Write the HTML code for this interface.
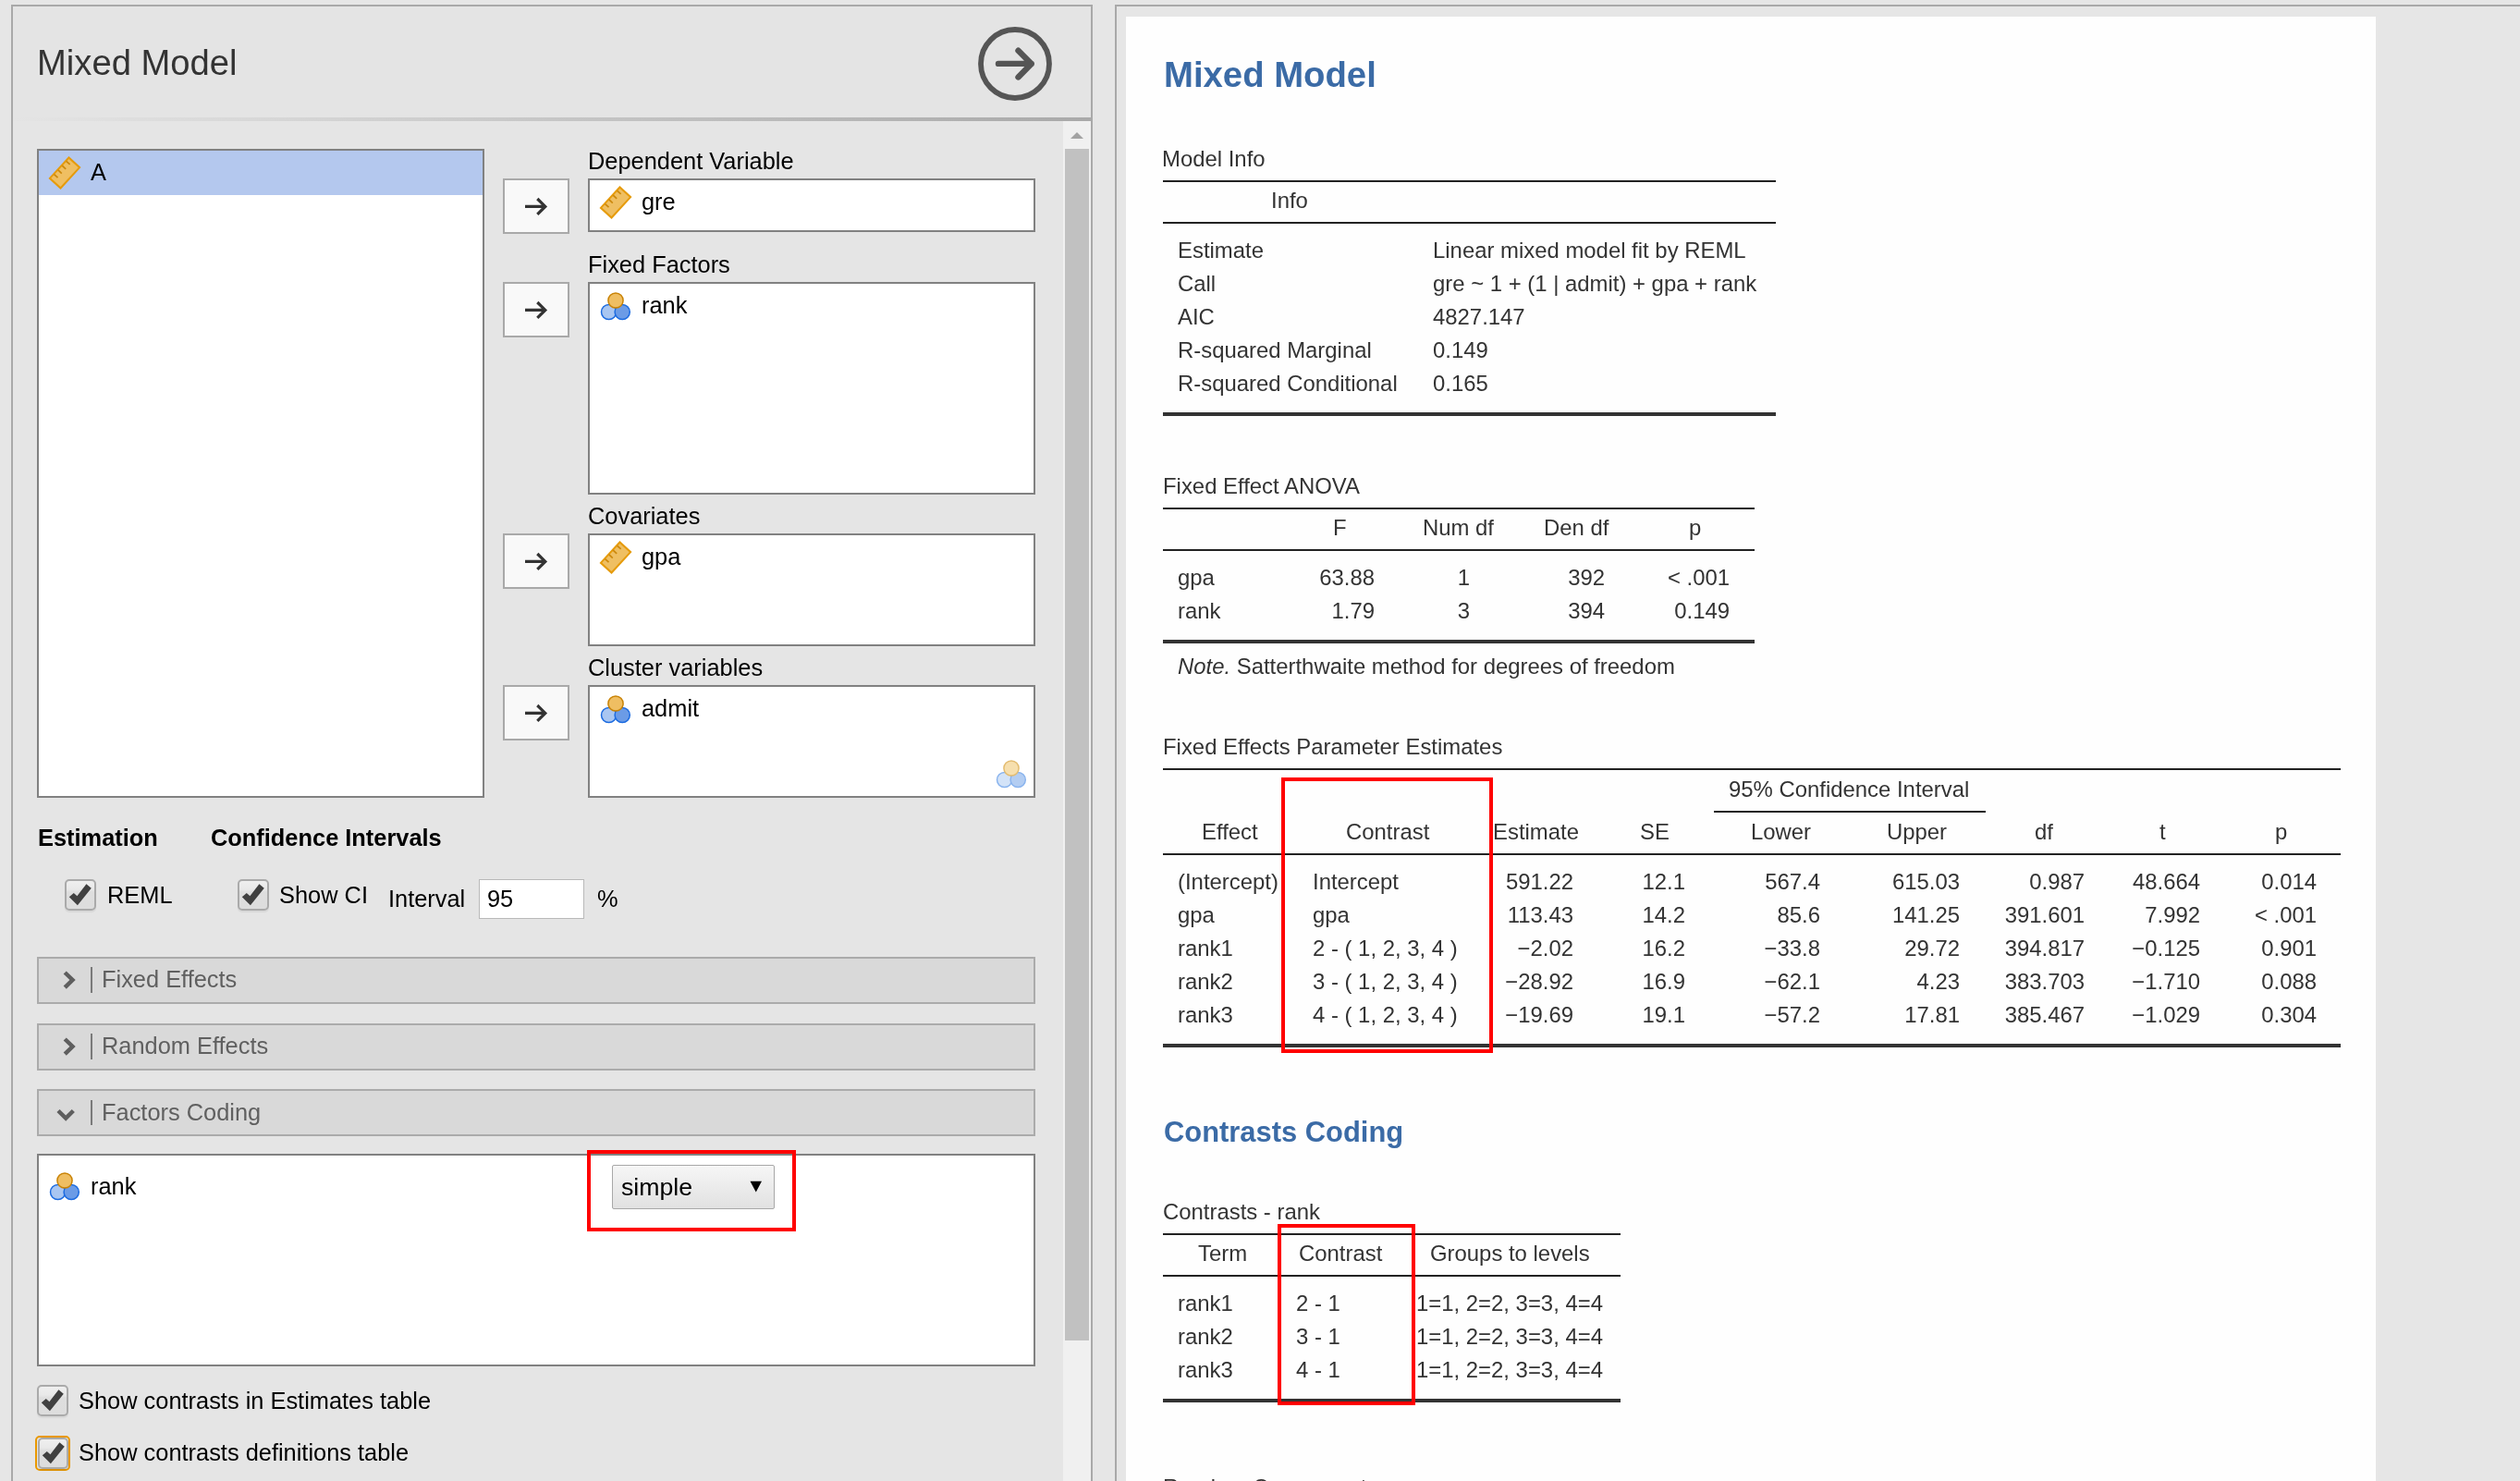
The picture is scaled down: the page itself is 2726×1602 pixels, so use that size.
<!DOCTYPE html>
<html><head><meta charset="utf-8"><title>Mixed Model</title>
<style>
html,body{margin:0;padding:0;}
body{width:2726px;height:1602px;overflow:hidden;position:relative;background:#e6e6e6;font-family:"Liberation Sans",sans-serif;}
.t{position:absolute;line-height:1;white-space:nowrap;will-change:transform;}
.r{position:absolute;}
svg.r{overflow:visible;}
</style></head><body>
<div class="r" style="left:12px;top:5px;width:1170px;height:1597px;background:#e5e5e5;border:2px solid #a9a9a9;border-bottom:none;box-sizing:border-box;"></div>
<div class="r" style="left:14px;top:7px;width:1166px;height:120px;background:#e4e4e4;"></div>
<div class="r" style="left:14px;top:127px;width:1166px;height:4px;background:linear-gradient(to right,#e4e4e4 0%,#d6d6d6 25%,#c6c6c6 50%,#b8b8b8 75%,#a9a9a9 100%);"></div>
<div class="t" style="top:48.76px;font-size:38.2px;color:#333;left:40.10px;">Mixed Model</div>
<svg class="r" style="left:1054px;top:25px" width="88" height="88" viewBox="0 0 88 88"><circle cx="44" cy="44" r="37" fill="none" stroke="#555" stroke-width="5.8"/><path d="M26 43.9 H61.7 M47.5 29.7 L61.7 43.9 L47.5 58.4" fill="none" stroke="#555" stroke-width="6.4" stroke-linecap="round" stroke-linejoin="round"/></svg>
<div class="r" style="left:1150px;top:131px;width:30px;height:1471px;background:#f0f0f0;"></div>
<svg class="r" style="left:1150px;top:131px" width="30" height="30" viewBox="0 0 30 30"><polygon points="8,19 15,12 22,19" fill="#a3a3a3"/></svg>
<div class="r" style="left:1152px;top:161px;width:26px;height:1289px;background:#c1c1c1;"></div>
<div class="r" style="left:40px;top:161px;width:484px;height:702px;background:#fff;border:2px solid #818181;box-sizing:border-box;"></div>
<div class="r" style="left:42px;top:163px;width:480px;height:48px;background:#b4c8ee;"></div>
<svg class="r" style="left:49.95px;top:167.24px" width="40" height="40" viewBox="-20 -20 40 40"><g transform="rotate(-47.4)"><rect x="-15.2" y="-7.9" width="30.4" height="15.8" fill="#efbf62" stroke="#e69b0b" stroke-width="2"/><g stroke="#cc880c" stroke-width="1.7"><line x1="-8.9" y1="-7.4" x2="-8.9" y2="-2.0"/><line x1="-2.6" y1="-7.4" x2="-2.6" y2="-2.0"/><line x1="3.9" y1="-7.4" x2="3.9" y2="-2.0"/><line x1="10.5" y1="-7.4" x2="10.5" y2="-2.0"/></g></g></svg>
<div class="t" style="top:173.50px;font-size:25.4px;color:#000;left:98.00px;">A</div>
<div class="r" style="left:544px;top:193px;width:72px;height:60px;border:2px solid #a9a9a9;background:#f9f9f9;box-sizing:border-box;"></div>
<svg class="r" style="left:544px;top:193px" width="72" height="60" viewBox="0 0 72 60"><path d="M24 30.4 H45.5 M37.3 22 L45.8 30.4 L37.3 38.8" fill="none" stroke="#333" stroke-width="3.2" stroke-linecap="butt" stroke-linejoin="miter"/></svg>
<div class="r" style="left:544px;top:305px;width:72px;height:60px;border:2px solid #a9a9a9;background:#f9f9f9;box-sizing:border-box;"></div>
<svg class="r" style="left:544px;top:305px" width="72" height="60" viewBox="0 0 72 60"><path d="M24 30.4 H45.5 M37.3 22 L45.8 30.4 L37.3 38.8" fill="none" stroke="#333" stroke-width="3.2" stroke-linecap="butt" stroke-linejoin="miter"/></svg>
<div class="r" style="left:544px;top:577px;width:72px;height:60px;border:2px solid #a9a9a9;background:#f9f9f9;box-sizing:border-box;"></div>
<svg class="r" style="left:544px;top:577px" width="72" height="60" viewBox="0 0 72 60"><path d="M24 30.4 H45.5 M37.3 22 L45.8 30.4 L37.3 38.8" fill="none" stroke="#333" stroke-width="3.2" stroke-linecap="butt" stroke-linejoin="miter"/></svg>
<div class="r" style="left:544px;top:741px;width:72px;height:60px;border:2px solid #a9a9a9;background:#f9f9f9;box-sizing:border-box;"></div>
<svg class="r" style="left:544px;top:741px" width="72" height="60" viewBox="0 0 72 60"><path d="M24 30.4 H45.5 M37.3 22 L45.8 30.4 L37.3 38.8" fill="none" stroke="#333" stroke-width="3.2" stroke-linecap="butt" stroke-linejoin="miter"/></svg>
<div class="t" style="top:161.50px;font-size:25.4px;color:#000;left:635.70px;">Dependent Variable</div>
<div class="r" style="left:636px;top:193px;width:484px;height:58px;background:#fff;border:2px solid #818181;box-sizing:border-box;"></div>
<svg class="r" style="left:646.05px;top:199.00px" width="40" height="40" viewBox="-20 -20 40 40"><g transform="rotate(-47.4)"><rect x="-15.2" y="-7.9" width="30.4" height="15.8" fill="#efbf62" stroke="#e69b0b" stroke-width="2"/><g stroke="#cc880c" stroke-width="1.7"><line x1="-8.9" y1="-7.4" x2="-8.9" y2="-2.0"/><line x1="-2.6" y1="-7.4" x2="-2.6" y2="-2.0"/><line x1="3.9" y1="-7.4" x2="3.9" y2="-2.0"/><line x1="10.5" y1="-7.4" x2="10.5" y2="-2.0"/></g></g></svg>
<div class="t" style="top:205.50px;font-size:25.4px;color:#000;left:694.00px;">gre</div>
<div class="t" style="top:273.50px;font-size:25.4px;color:#000;left:635.70px;">Fixed Factors</div>
<div class="r" style="left:636px;top:305px;width:484px;height:230px;background:#fff;border:2px solid #818181;box-sizing:border-box;"></div>
<svg class="r" style="left:646.20px;top:310.50px" width="40" height="40" viewBox="0 0 40 40"><circle cx="12.60" cy="26.50" r="8.1" fill="#a9c6f1" stroke="#1c6be0" stroke-width="1.5"/><circle cx="27.20" cy="26.50" r="8.1" fill="#6b9be6" stroke="#1c6be0" stroke-width="1.5"/><circle cx="20" cy="14" r="8.1" fill="#efbe62" stroke="#c98306" stroke-width="1.5"/></svg>
<div class="t" style="top:317.50px;font-size:25.4px;color:#000;left:694.00px;">rank</div>
<div class="t" style="top:545.50px;font-size:25.4px;color:#000;left:635.70px;">Covariates</div>
<div class="r" style="left:636px;top:577px;width:484px;height:122px;background:#fff;border:2px solid #818181;box-sizing:border-box;"></div>
<svg class="r" style="left:646.05px;top:583.00px" width="40" height="40" viewBox="-20 -20 40 40"><g transform="rotate(-47.4)"><rect x="-15.2" y="-7.9" width="30.4" height="15.8" fill="#efbf62" stroke="#e69b0b" stroke-width="2"/><g stroke="#cc880c" stroke-width="1.7"><line x1="-8.9" y1="-7.4" x2="-8.9" y2="-2.0"/><line x1="-2.6" y1="-7.4" x2="-2.6" y2="-2.0"/><line x1="3.9" y1="-7.4" x2="3.9" y2="-2.0"/><line x1="10.5" y1="-7.4" x2="10.5" y2="-2.0"/></g></g></svg>
<div class="t" style="top:589.50px;font-size:25.4px;color:#000;left:694.00px;">gpa</div>
<div class="t" style="top:709.50px;font-size:25.4px;color:#000;left:635.70px;">Cluster variables</div>
<div class="r" style="left:636px;top:741px;width:484px;height:122px;background:#fff;border:2px solid #818181;box-sizing:border-box;"></div>
<svg class="r" style="left:646.20px;top:746.50px" width="40" height="40" viewBox="0 0 40 40"><circle cx="12.60" cy="26.50" r="8.1" fill="#a9c6f1" stroke="#1c6be0" stroke-width="1.5"/><circle cx="27.20" cy="26.50" r="8.1" fill="#6b9be6" stroke="#1c6be0" stroke-width="1.5"/><circle cx="20" cy="14" r="8.1" fill="#efbe62" stroke="#c98306" stroke-width="1.5"/></svg>
<div class="t" style="top:753.50px;font-size:25.4px;color:#000;left:694.00px;">admit</div>
<svg class="r" style="left:1074.00px;top:816.50px" width="40" height="40" viewBox="0 0 40 40"><circle cx="12.60" cy="26.50" r="8.1" fill="#d3e3f8" stroke="#8ab4ee" stroke-width="1.5"/><circle cx="27.20" cy="26.50" r="8.1" fill="#b3cdf2" stroke="#8ab4ee" stroke-width="1.5"/><circle cx="20" cy="14" r="8.1" fill="#f6dfae" stroke="#e3bc70" stroke-width="1.5"/></svg>
<div class="t" style="top:893.50px;font-size:25.4px;color:#000;font-weight:bold;left:40.80px;">Estimation</div>
<div class="t" style="top:893.50px;font-size:25.4px;color:#000;font-weight:bold;left:227.80px;">Confidence Intervals</div>
<div class="r" style="left:70px;top:951px;width:33.7px;height:33.5px;border:2px solid #aaaaaa;border-radius:5px;box-sizing:border-box;background:linear-gradient(#efefef 0%,#e9e9e9 30%,#dedede 40%,#dddddd 100%);box-shadow:0 2px 1px rgba(0,0,0,0.06);"></div>
<svg class="r" style="left:70px;top:951px" width="34" height="34" viewBox="0 0 34 34"><polygon points="4.80,19.30 9.80,14.90 13.40,18.20 23.40,5.20 28.80,9.70 13.90,28.30" fill="#404040"/></svg>
<div class="t" style="top:955.50px;font-size:25.4px;color:#000;left:115.70px;">REML</div>
<div class="r" style="left:257px;top:951px;width:33.69999999999999px;height:33.5px;border:2px solid #aaaaaa;border-radius:5px;box-sizing:border-box;background:linear-gradient(#efefef 0%,#e9e9e9 30%,#dedede 40%,#dddddd 100%);box-shadow:0 2px 1px rgba(0,0,0,0.06);"></div>
<svg class="r" style="left:257px;top:951px" width="34" height="34" viewBox="0 0 34 34"><polygon points="4.80,19.30 9.80,14.90 13.40,18.20 23.40,5.20 28.80,9.70 13.90,28.30" fill="#404040"/></svg>
<div class="t" style="top:955.50px;font-size:25.4px;color:#000;left:302.40px;">Show CI</div>
<div class="t" style="top:959.50px;font-size:25.4px;color:#000;left:419.60px;">Interval</div>
<div class="r" style="left:518px;top:951px;width:114px;height:43px;background:#fff;border:1px solid #b9b9b9;box-sizing:border-box;"></div>
<div class="t" style="top:959.50px;font-size:25.4px;color:#000;left:527.00px;">95</div>
<div class="t" style="top:959.50px;font-size:25.4px;color:#000;left:645.80px;">%</div>
<div class="r" style="left:40px;top:1034.5px;width:1080px;height:51.0px;background:#d9d9d9;border:2px solid #ababab;box-sizing:border-box;"></div>
<svg class="r" style="left:60px;top:1043.2px" width="30" height="34" viewBox="0 0 30 34"><path d="M10.2 9 L18.5 17 L10.2 25.2" fill="none" stroke="#5f5f5f" stroke-width="4.5"/></svg>
<div class="r" style="left:97.5px;top:1046.0px;width:2.200000000000003px;height:27.5px;background:#7a7a7a;"></div>
<div class="t" style="top:1047.20px;font-size:25.4px;color:#606060;left:110.40px;">Fixed Effects</div>
<div class="r" style="left:40px;top:1106.5px;width:1080px;height:51.0px;background:#d9d9d9;border:2px solid #ababab;box-sizing:border-box;"></div>
<svg class="r" style="left:60px;top:1115.2px" width="30" height="34" viewBox="0 0 30 34"><path d="M10.2 9 L18.5 17 L10.2 25.2" fill="none" stroke="#5f5f5f" stroke-width="4.5"/></svg>
<div class="r" style="left:97.5px;top:1118.0px;width:2.200000000000003px;height:27.5px;background:#7a7a7a;"></div>
<div class="t" style="top:1119.00px;font-size:25.4px;color:#606060;left:110.40px;">Random Effects</div>
<div class="r" style="left:40px;top:1178px;width:1080px;height:51px;background:#d9d9d9;border:2px solid #ababab;box-sizing:border-box;"></div>
<svg class="r" style="left:56px;top:1184px" width="30" height="34" viewBox="0 0 30 34"><path d="M7 17.5 L15.2 25.5 L23.3 17.5" fill="none" stroke="#5f5f5f" stroke-width="4.5"/></svg>
<div class="r" style="left:97.5px;top:1189.5px;width:2.200000000000003px;height:27.5px;background:#7a7a7a;"></div>
<div class="t" style="top:1190.70px;font-size:25.4px;color:#606060;left:110.40px;">Factors Coding</div>
<div class="r" style="left:40px;top:1248px;width:1080px;height:230px;background:#fff;border:2px solid #818181;box-sizing:border-box;"></div>
<svg class="r" style="left:50.00px;top:1263.20px" width="40" height="40" viewBox="0 0 40 40"><circle cx="12.60" cy="26.50" r="8.1" fill="#a9c6f1" stroke="#1c6be0" stroke-width="1.5"/><circle cx="27.20" cy="26.50" r="8.1" fill="#6b9be6" stroke="#1c6be0" stroke-width="1.5"/><circle cx="20" cy="14" r="8.1" fill="#efbe62" stroke="#c98306" stroke-width="1.5"/></svg>
<div class="t" style="top:1270.50px;font-size:25.4px;color:#000;left:97.70px;">rank</div>
<div class="r" style="left:661.5px;top:1260px;width:176.5px;height:48px;background:linear-gradient(#f6f6f6,#e1e1e1);border:1px solid #a8a8a8;border-radius:2px;box-sizing:border-box;"></div>
<div class="t" style="top:1271.40px;font-size:26.7px;color:#000;left:672.00px;">simple</div>
<svg class="r" style="left:808px;top:1274px" width="20" height="20" viewBox="0 0 20 20"><polygon points="3.5,3.8 16,3.8 9.75,15.4" fill="#000"/></svg>
<div class="r" style="left:634.5px;top:1243.5px;width:226.0px;height:88.0px;border:4px solid #ff0000;box-sizing:border-box;"></div>
<div class="r" style="left:40.3px;top:1498.3px;width:33.7px;height:33.5px;border:2px solid #aaaaaa;border-radius:5px;box-sizing:border-box;background:linear-gradient(#efefef 0%,#e9e9e9 30%,#dedede 40%,#dddddd 100%);box-shadow:0 2px 1px rgba(0,0,0,0.06);"></div>
<svg class="r" style="left:40.3px;top:1498.3px" width="34" height="34" viewBox="0 0 34 34"><polygon points="4.80,19.30 9.80,14.90 13.40,18.20 23.40,5.20 28.80,9.70 13.90,28.30" fill="#404040"/></svg>
<div class="t" style="top:1502.50px;font-size:25.4px;color:#000;left:85.40px;">Show contrasts in Estimates table</div>
<div class="r" style="left:38.4px;top:1553px;width:38.00000000000001px;height:38px;border:2.5px solid #e89800;border-radius:5px;box-sizing:border-box;"></div>
<div class="r" style="left:40.6px;top:1555px;width:33.70000000000001px;height:33.5px;border:2px solid #aaaaaa;border-radius:5px;box-sizing:border-box;background:linear-gradient(#efefef 0%,#e9e9e9 30%,#dedede 40%,#dddddd 100%);box-shadow:0 2px 1px rgba(0,0,0,0.06);"></div>
<svg class="r" style="left:40.6px;top:1555px" width="34" height="34" viewBox="0 0 34 34"><polygon points="4.80,19.30 9.80,14.90 13.40,18.20 23.40,5.20 28.80,9.70 13.90,28.30" fill="#404040"/></svg>
<div class="t" style="top:1559.00px;font-size:25.4px;color:#000;left:85.40px;">Show contrasts definitions table</div>
<div class="r" style="left:1206px;top:5px;width:1520px;height:1597px;background:#e6e6e6;border-left:2px solid #a9a9a9;border-top:2px solid #a9a9a9;box-sizing:border-box;"></div>
<div class="r" style="left:1218px;top:18px;width:1352px;height:1584px;background:#fefefe;"></div>
<div class="t" style="top:61.68px;font-size:38.3px;color:#3b6ba6;font-weight:bold;left:1258.90px;">Mixed Model</div>
<div class="t" style="top:159.77px;font-size:23.9px;color:#333;left:1257.40px;">Model Info</div>
<div class="r" style="left:1258px;top:195px;width:663px;height:2px;background:#222;"></div>
<div class="t" style="top:204.77px;font-size:23.9px;color:#333;left:1375.40px;">Info</div>
<div class="r" style="left:1258px;top:240px;width:663px;height:2px;background:#222;"></div>
<div class="t" style="top:258.77px;font-size:23.9px;color:#333;left:1273.60px;">Estimate</div>
<div class="t" style="top:258.77px;font-size:23.9px;color:#333;left:1549.50px;">Linear mixed model fit by REML</div>
<div class="t" style="top:294.77px;font-size:23.9px;color:#333;left:1273.60px;">Call</div>
<div class="t" style="top:294.77px;font-size:23.9px;color:#333;left:1549.50px;">gre ~ 1 + (1 | admit) + gpa + rank</div>
<div class="t" style="top:330.77px;font-size:23.9px;color:#333;left:1273.60px;">AIC</div>
<div class="t" style="top:330.77px;font-size:23.9px;color:#333;left:1549.50px;">4827.147</div>
<div class="t" style="top:366.97px;font-size:23.9px;color:#333;left:1273.60px;">R-squared Marginal</div>
<div class="t" style="top:366.97px;font-size:23.9px;color:#333;left:1549.50px;">0.149</div>
<div class="t" style="top:402.77px;font-size:23.9px;color:#333;left:1273.60px;">R-squared Conditional</div>
<div class="t" style="top:402.77px;font-size:23.9px;color:#333;left:1549.50px;">0.165</div>
<div class="r" style="left:1258px;top:446px;width:663px;height:4px;background:#333;"></div>
<div class="t" style="top:513.77px;font-size:23.9px;color:#333;left:1257.60px;">Fixed Effect ANOVA</div>
<div class="r" style="left:1258px;top:549px;width:640px;height:2px;background:#222;"></div>
<div class="t" style="top:559.47px;font-size:23.9px;color:#333;left:1442.20px;">F</div>
<div class="t" style="top:559.47px;font-size:23.9px;color:#333;left:1539.20px;">Num df</div>
<div class="t" style="top:559.47px;font-size:23.9px;color:#333;left:1670.20px;">Den df</div>
<div class="t" style="top:559.47px;font-size:23.9px;color:#333;left:1826.90px;">p</div>
<div class="r" style="left:1258px;top:594px;width:640px;height:2px;background:#222;"></div>
<div class="t" style="top:612.77px;font-size:23.9px;color:#333;left:1273.60px;">gpa</div>
<div class="t" style="top:612.77px;font-size:23.9px;color:#333;left:486.80px;width:1000px;text-align:right;">63.88</div>
<div class="t" style="top:612.77px;font-size:23.9px;color:#333;left:589.60px;width:1000px;text-align:right;">1</div>
<div class="t" style="top:612.77px;font-size:23.9px;color:#333;left:736.00px;width:1000px;text-align:right;">392</div>
<div class="t" style="top:612.77px;font-size:23.9px;color:#333;left:871.20px;width:1000px;text-align:right;">&lt; .001</div>
<div class="t" style="top:648.77px;font-size:23.9px;color:#333;left:1273.60px;">rank</div>
<div class="t" style="top:648.77px;font-size:23.9px;color:#333;left:486.80px;width:1000px;text-align:right;">1.79</div>
<div class="t" style="top:648.77px;font-size:23.9px;color:#333;left:589.60px;width:1000px;text-align:right;">3</div>
<div class="t" style="top:648.77px;font-size:23.9px;color:#333;left:736.00px;width:1000px;text-align:right;">394</div>
<div class="t" style="top:648.77px;font-size:23.9px;color:#333;left:871.20px;width:1000px;text-align:right;">0.149</div>
<div class="r" style="left:1258px;top:692px;width:640px;height:4px;background:#333;"></div>
<div class="t" style="top:708.57px;font-size:23.9px;color:#333;left:1273.80px;"><i>Note.</i> Satterthwaite method for degrees of freedom</div>
<div class="t" style="top:796.27px;font-size:23.9px;color:#333;left:1257.60px;">Fixed Effects Parameter Estimates</div>
<div class="r" style="left:1258px;top:831px;width:1273.5px;height:2px;background:#222;"></div>
<div class="t" style="top:842.37px;font-size:23.9px;color:#333;left:1869.50px;">95% Confidence Interval</div>
<div class="r" style="left:1854px;top:877px;width:293.5999999999999px;height:2px;background:#222;"></div>
<div class="t" style="top:887.87px;font-size:23.9px;color:#333;left:1300.20px;">Effect</div>
<div class="t" style="top:887.87px;font-size:23.9px;color:#333;left:1455.70px;">Contrast</div>
<div class="t" style="top:887.87px;font-size:23.9px;color:#333;left:1615.00px;">Estimate</div>
<div class="t" style="top:887.87px;font-size:23.9px;color:#333;left:1773.60px;">SE</div>
<div class="t" style="top:887.87px;font-size:23.9px;color:#333;left:1893.80px;">Lower</div>
<div class="t" style="top:887.87px;font-size:23.9px;color:#333;left:2041.20px;">Upper</div>
<div class="t" style="top:887.87px;font-size:23.9px;color:#333;left:2201.20px;">df</div>
<div class="t" style="top:887.87px;font-size:23.9px;color:#333;left:2336.20px;">t</div>
<div class="t" style="top:887.87px;font-size:23.9px;color:#333;left:2460.80px;">p</div>
<div class="r" style="left:1258px;top:922.5px;width:1273.5px;height:2.0px;background:#222;"></div>
<div class="t" style="top:941.77px;font-size:23.9px;color:#333;left:1273.80px;">(Intercept)</div>
<div class="t" style="top:941.77px;font-size:23.9px;color:#333;left:1420.20px;">Intercept</div>
<div class="t" style="top:941.77px;font-size:23.9px;color:#333;left:702.30px;width:1000px;text-align:right;">591.22</div>
<div class="t" style="top:941.77px;font-size:23.9px;color:#333;left:823.00px;width:1000px;text-align:right;">12.1</div>
<div class="t" style="top:941.77px;font-size:23.9px;color:#333;left:969.00px;width:1000px;text-align:right;">567.4</div>
<div class="t" style="top:941.77px;font-size:23.9px;color:#333;left:1120.30px;width:1000px;text-align:right;">615.03</div>
<div class="t" style="top:941.77px;font-size:23.9px;color:#333;left:1254.90px;width:1000px;text-align:right;">0.987</div>
<div class="t" style="top:941.77px;font-size:23.9px;color:#333;left:1379.90px;width:1000px;text-align:right;">48.664</div>
<div class="t" style="top:941.77px;font-size:23.9px;color:#333;left:1505.80px;width:1000px;text-align:right;">0.014</div>
<div class="t" style="top:977.77px;font-size:23.9px;color:#333;left:1273.80px;">gpa</div>
<div class="t" style="top:977.77px;font-size:23.9px;color:#333;left:1420.20px;">gpa</div>
<div class="t" style="top:977.77px;font-size:23.9px;color:#333;left:702.30px;width:1000px;text-align:right;">113.43</div>
<div class="t" style="top:977.77px;font-size:23.9px;color:#333;left:823.00px;width:1000px;text-align:right;">14.2</div>
<div class="t" style="top:977.77px;font-size:23.9px;color:#333;left:969.00px;width:1000px;text-align:right;">85.6</div>
<div class="t" style="top:977.77px;font-size:23.9px;color:#333;left:1120.30px;width:1000px;text-align:right;">141.25</div>
<div class="t" style="top:977.77px;font-size:23.9px;color:#333;left:1254.90px;width:1000px;text-align:right;">391.601</div>
<div class="t" style="top:977.77px;font-size:23.9px;color:#333;left:1379.90px;width:1000px;text-align:right;">7.992</div>
<div class="t" style="top:977.77px;font-size:23.9px;color:#333;left:1505.80px;width:1000px;text-align:right;">&lt; .001</div>
<div class="t" style="top:1013.77px;font-size:23.9px;color:#333;left:1273.80px;">rank1</div>
<div class="t" style="top:1013.77px;font-size:23.9px;color:#333;left:1420.20px;">2 - ( 1, 2, 3, 4 )</div>
<div class="t" style="top:1013.77px;font-size:23.9px;color:#333;left:702.30px;width:1000px;text-align:right;">&minus;2.02</div>
<div class="t" style="top:1013.77px;font-size:23.9px;color:#333;left:823.00px;width:1000px;text-align:right;">16.2</div>
<div class="t" style="top:1013.77px;font-size:23.9px;color:#333;left:969.00px;width:1000px;text-align:right;">&minus;33.8</div>
<div class="t" style="top:1013.77px;font-size:23.9px;color:#333;left:1120.30px;width:1000px;text-align:right;">29.72</div>
<div class="t" style="top:1013.77px;font-size:23.9px;color:#333;left:1254.90px;width:1000px;text-align:right;">394.817</div>
<div class="t" style="top:1013.77px;font-size:23.9px;color:#333;left:1379.90px;width:1000px;text-align:right;">&minus;0.125</div>
<div class="t" style="top:1013.77px;font-size:23.9px;color:#333;left:1505.80px;width:1000px;text-align:right;">0.901</div>
<div class="t" style="top:1049.77px;font-size:23.9px;color:#333;left:1273.80px;">rank2</div>
<div class="t" style="top:1049.77px;font-size:23.9px;color:#333;left:1420.20px;">3 - ( 1, 2, 3, 4 )</div>
<div class="t" style="top:1049.77px;font-size:23.9px;color:#333;left:702.30px;width:1000px;text-align:right;">&minus;28.92</div>
<div class="t" style="top:1049.77px;font-size:23.9px;color:#333;left:823.00px;width:1000px;text-align:right;">16.9</div>
<div class="t" style="top:1049.77px;font-size:23.9px;color:#333;left:969.00px;width:1000px;text-align:right;">&minus;62.1</div>
<div class="t" style="top:1049.77px;font-size:23.9px;color:#333;left:1120.30px;width:1000px;text-align:right;">4.23</div>
<div class="t" style="top:1049.77px;font-size:23.9px;color:#333;left:1254.90px;width:1000px;text-align:right;">383.703</div>
<div class="t" style="top:1049.77px;font-size:23.9px;color:#333;left:1379.90px;width:1000px;text-align:right;">&minus;1.710</div>
<div class="t" style="top:1049.77px;font-size:23.9px;color:#333;left:1505.80px;width:1000px;text-align:right;">0.088</div>
<div class="t" style="top:1085.77px;font-size:23.9px;color:#333;left:1273.80px;">rank3</div>
<div class="t" style="top:1085.77px;font-size:23.9px;color:#333;left:1420.20px;">4 - ( 1, 2, 3, 4 )</div>
<div class="t" style="top:1085.77px;font-size:23.9px;color:#333;left:702.30px;width:1000px;text-align:right;">&minus;19.69</div>
<div class="t" style="top:1085.77px;font-size:23.9px;color:#333;left:823.00px;width:1000px;text-align:right;">19.1</div>
<div class="t" style="top:1085.77px;font-size:23.9px;color:#333;left:969.00px;width:1000px;text-align:right;">&minus;57.2</div>
<div class="t" style="top:1085.77px;font-size:23.9px;color:#333;left:1120.30px;width:1000px;text-align:right;">17.81</div>
<div class="t" style="top:1085.77px;font-size:23.9px;color:#333;left:1254.90px;width:1000px;text-align:right;">385.467</div>
<div class="t" style="top:1085.77px;font-size:23.9px;color:#333;left:1379.90px;width:1000px;text-align:right;">&minus;1.029</div>
<div class="t" style="top:1085.77px;font-size:23.9px;color:#333;left:1505.80px;width:1000px;text-align:right;">0.304</div>
<div class="r" style="left:1258px;top:1129px;width:1273.5px;height:4px;background:#333;"></div>
<div class="r" style="left:1385.5px;top:840.5px;width:229.0px;height:298.5px;border:4px solid #ff0000;box-sizing:border-box;"></div>
<div class="t" style="top:1209.74px;font-size:30.9px;color:#3b6ba6;font-weight:bold;left:1258.70px;">Contrasts Coding</div>
<div class="t" style="top:1298.97px;font-size:23.9px;color:#333;left:1258.20px;">Contrasts - rank</div>
<div class="r" style="left:1258px;top:1334px;width:495px;height:2px;background:#222;"></div>
<div class="t" style="top:1343.77px;font-size:23.9px;color:#333;left:1295.50px;">Term</div>
<div class="t" style="top:1343.77px;font-size:23.9px;color:#333;left:1404.70px;">Contrast</div>
<div class="t" style="top:1343.77px;font-size:23.9px;color:#333;left:1546.70px;">Groups to levels</div>
<div class="r" style="left:1258px;top:1378.5px;width:495px;height:2.0px;background:#222;"></div>
<div class="t" style="top:1397.77px;font-size:23.9px;color:#333;left:1274.40px;">rank1</div>
<div class="t" style="top:1397.77px;font-size:23.9px;color:#333;left:1401.90px;">2 - 1</div>
<div class="t" style="top:1397.77px;font-size:23.9px;color:#333;left:1531.70px;">1=1, 2=2, 3=3, 4=4</div>
<div class="t" style="top:1434.17px;font-size:23.9px;color:#333;left:1274.40px;">rank2</div>
<div class="t" style="top:1434.17px;font-size:23.9px;color:#333;left:1401.90px;">3 - 1</div>
<div class="t" style="top:1434.17px;font-size:23.9px;color:#333;left:1531.70px;">1=1, 2=2, 3=3, 4=4</div>
<div class="t" style="top:1470.17px;font-size:23.9px;color:#333;left:1274.40px;">rank3</div>
<div class="t" style="top:1470.17px;font-size:23.9px;color:#333;left:1401.90px;">4 - 1</div>
<div class="t" style="top:1470.17px;font-size:23.9px;color:#333;left:1531.70px;">1=1, 2=2, 3=3, 4=4</div>
<div class="r" style="left:1258px;top:1513px;width:495px;height:4px;background:#333;"></div>
<div class="r" style="left:1382px;top:1324.3px;width:149px;height:195.70000000000005px;border:4px solid #ff0000;box-sizing:border-box;"></div>
<div class="t" style="top:1596.77px;font-size:23.9px;color:#333;left:1258.00px;">Random Components</div>
</body></html>
